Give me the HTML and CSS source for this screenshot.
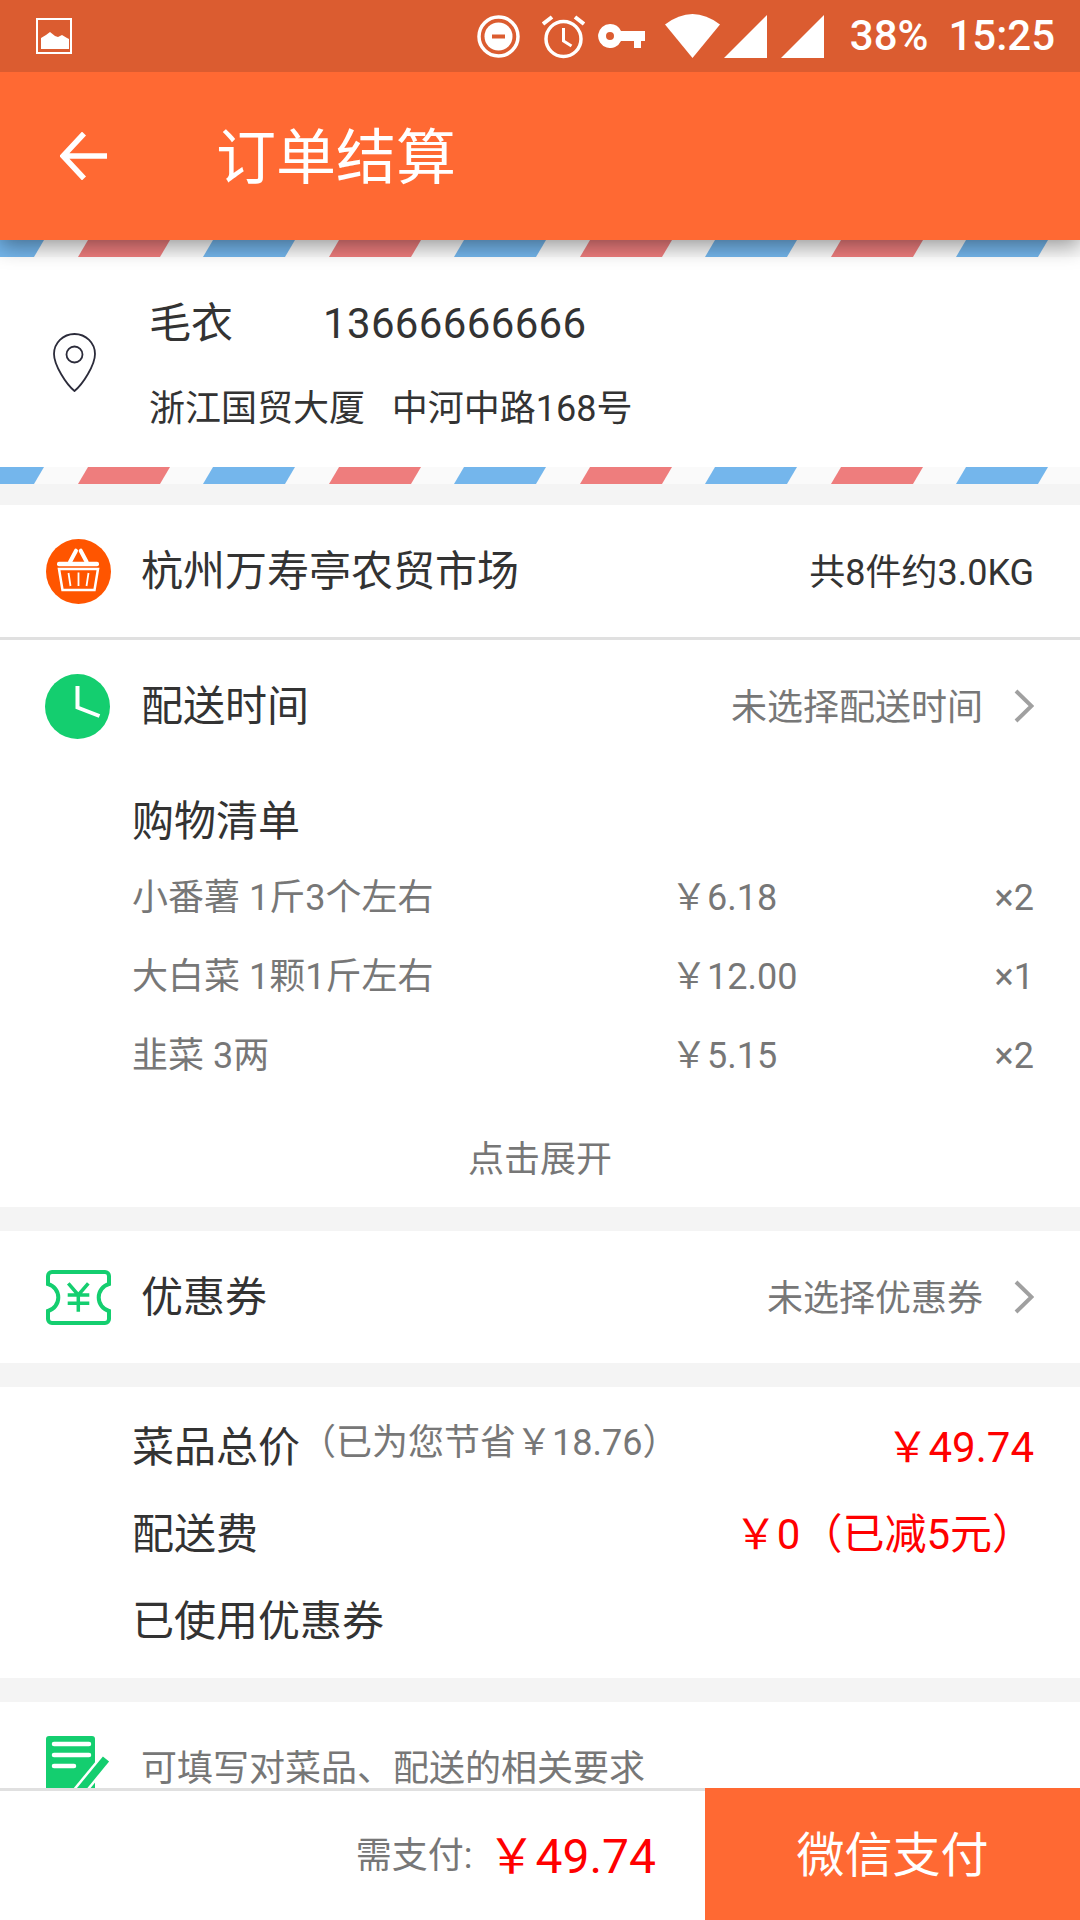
FILE: index.html
```html
<!DOCTYPE html>
<html lang="zh-CN">
<head>
  <meta charset="UTF-8">
  <title>订单结算</title>
  <meta name="viewport" content="width=device-width, initial-scale=1.0">
  <link rel="stylesheet" href="styles.css">
</head>
<body>

<div class="status-bar">
  <svg class="st-pic" width="36" height="36" viewBox="0 0 36 36">
    <rect x="1" y="1" width="34" height="34" fill="none" stroke="#fff" stroke-width="2"/>
    <path d="M5 31V20l5-3 4-3 5 4 3 1 4-2 5 3 2 1v10z" fill="#fff"/>
  </svg>
  <div class="status-right">
    <svg width="43" height="43" viewBox="0 0 43 43">
      <circle cx="21.5" cy="21.5" r="19.5" fill="none" stroke="#fff" stroke-width="3.5"/>
      <circle cx="21.5" cy="21.5" r="14" fill="#fff"/>
      <rect x="15" y="19.5" width="13" height="4" fill="#db5c30"/>
    </svg>
    <svg class="gap-22" width="43" height="46" viewBox="0 0 43 46">
      <circle cx="21.5" cy="26" r="17.5" fill="none" stroke="#fff" stroke-width="3.5"/>
      <path d="M21.5 15v13l8 5" fill="none" stroke="#fff" stroke-width="3"/>
      <path d="M1 11 10 4M42 11 33 4" fill="none" stroke="#fff" stroke-width="4"/>
    </svg>
    <svg class="gap-13" width="47" height="24" viewBox="0 0 47 24">
      <path fill-rule="evenodd" d="M12 0a12 12 0 0 1 11 7h24v10h-4v7H36v-7H23A12 12 0 1 1 12 0zm0 8a4 4 0 1 0 0 8 4 4 0 0 0 0-8z" fill="#fff"/>
    </svg>
    <svg class="gap-20" width="55" height="44" viewBox="0 0 55 44">
      <path d="M0 10.5Q27.500-10.500 55 10.500L27.500 44z" fill="#fff"/>
    </svg>
    <svg class="gap-4" width="43" height="43" viewBox="0 0 43 43"><path d="M43 0V43H0z" fill="#fff"/></svg>
    <svg class="gap-14" width="43" height="43" viewBox="0 0 43 43"><path d="M43 0V43H0z" fill="#fff"/></svg>
    <span class="st-text gap-26">38%</span>
    <span class="st-text gap-20">15:25</span>
  </div>
</div>

<header class="toolbar">
  <svg width="48" height="48" viewBox="0 0 48 48">
    <path d="M47 24H4M24 1.500 3 24l21 22.500" fill="none" stroke="#fff" stroke-width="5.500"/>
  </svg>
  <h1>订单结算</h1>
</header>

<main class="content">
  <section class="address">
    <svg class="airmail" width="1080" height="17">
      <defs>
        <pattern id="mail" width="251" height="17" patternUnits="userSpaceOnUse">
          <path d="M-38 0H44L34 17H-48z" fill="#74b6ec"/>
          <path d="M88 0H170L160 17H78z" fill="#ee7d7d"/>
          <path d="M213 0H295L285 17H203z" fill="#74b6ec"/>
        </pattern>
      </defs>
      <rect width="1080" height="17" fill="#fafafa"/>
      <rect width="1080" height="17" fill="url(#mail)"/>
    </svg>
    <div class="address-body">
      <svg class="pin" width="43" height="59" viewBox="0 0 43 59">
        <path d="M21.500 1C10 1 1 10 1 21c0 11 12 30 20.500 37C30 51 42 32 42 21 42 10 33 1 21.500 1z" fill="none" stroke="#2b2b3a" stroke-width="1.800"/>
        <circle cx="21.500" cy="21.500" r="8" fill="none" stroke="#2b2b3a" stroke-width="1.800"/>
      </svg>
      <div class="address-text">
        <div class="contact"><span class="contact-name">毛衣</span><span class="contact-phone">13666666666</span></div>
        <div class="street">浙江国贸大厦&nbsp;&nbsp;&nbsp;中河中路168号</div>
      </div>
    </div>
    <svg class="airmail" width="1080" height="17">
      <rect width="1080" height="17" fill="#fafafa"/>
      <rect width="1080" height="17" fill="url(#mail)"/>
    </svg>
  </section>

  <section class="card">
    <div class="row row-line">
      <svg class="row-icon" width="65" height="65" viewBox="0 0 65 65">
        <circle cx="32.500" cy="32.500" r="32.500" fill="#ff5500"/>
        <path d="M24 23 30 11.700M40.700 23 34.700 11.700" stroke="#fff" stroke-width="4" stroke-linecap="round"/>
        <rect x="11" y="22.700" width="42" height="4.500" rx="2" fill="#fff"/>
        <path d="M13 30H52L48.500 51H16.500z" fill="none" stroke="#fff" stroke-width="2.500"/>
        <path d="M32.500 33.500V47M22.500 34 24.500 47M42.500 34 40.500 47" stroke="#fff" stroke-width="1.800"/>
      </svg>
      <span class="row-title">杭州万寿亭农贸市场</span>
      <span class="row-note dark">共8件约3.0KG</span>
    </div>
    <div class="row">
      <svg class="row-icon clock" width="65" height="65" viewBox="0 0 65 65">
        <circle cx="32.500" cy="32.500" r="32.500" fill="#14ce6f"/>
        <path d="M32.500 12V33.500L54.500 42" fill="none" stroke="#fff" stroke-width="4"/>
      </svg>
      <span class="row-title">配送时间</span>
      <span class="row-note">未选择配送时间</span>
      <svg class="chevron" width="20" height="34" viewBox="0 0 20 34"><path d="M2 2 17.500 17 2 32" fill="none" stroke="#a0a0a0" stroke-width="4"/></svg>
    </div>
    <div class="list">
      <div class="list-title">购物清单</div>
      <div class="list-item"><span>小番薯 1斤3个左右</span><span>￥6.18</span><span>×2</span></div>
      <div class="list-item"><span>大白菜 1颗1斤左右</span><span>￥12.00</span><span>×1</span></div>
      <div class="list-item"><span>韭菜 3两</span><span>￥5.15</span><span>×2</span></div>
      <div class="list-more">点击展开</div>
    </div>
  </section>

  <section class="card">
    <div class="row">
      <svg class="row-icon" width="65" height="55" viewBox="0 0 65 55">
        <path d="M6 2H59A4 4 0 0 1 63 6V14A14 14 0 0 0 63 41V49A4 4 0 0 1 59 53H6A4 4 0 0 1 2 49V41A14 14 0 0 0 2 14V6A4 4 0 0 1 6 2z" fill="none" stroke="#14ce6f" stroke-width="4"/>
        <path d="M22.300 13.300 32.300 25 42.300 13.300M21.700 25H43.300M21.700 33.300H43.300M32.300 25V41.700" fill="none" stroke="#14ce6f" stroke-width="3.500"/>
      </svg>
      <span class="row-title">优惠券</span>
      <span class="row-note">未选择优惠券</span>
      <svg class="chevron" width="20" height="34" viewBox="0 0 20 34"><path d="M2 2 17.500 17 2 32" fill="none" stroke="#a0a0a0" stroke-width="4"/></svg>
    </div>
  </section>

  <section class="card totals">
    <div class="total-row">
      <span>菜品总价<small>（已为您节省￥18.76）</small></span>
      <span class="red">￥49.74</span>
    </div>
    <div class="total-row">
      <span>配送费</span>
      <span class="red">￥0（已减5元）</span>
    </div>
    <div class="total-row">
      <span>已使用优惠券</span>
    </div>
  </section>

  <section class="card remark">
    <svg width="65" height="70" viewBox="0 0 65 70">
      <rect width="49" height="70" rx="3" fill="#14ce6f"/>
      <path d="M8 8H43M8 19H43M8 30H28" stroke="#fff" stroke-width="4.500" stroke-linecap="round"/>
      <path d="M60 23 28 62" stroke="#fff" stroke-width="13"/>
      <path d="M60 23 28 62" stroke="#14ce6f" stroke-width="8"/>
    </svg>
    <span>可填写对菜品、配送的相关要求</span>
  </section>
</main>

<footer class="paybar">
  <div class="pay-sum">
    <span class="pay-label">需支付:</span>
    <span class="pay-price">￥49.74</span>
  </div>
  <div class="pay-button">微信支付</div>
</footer>

</body>
</html>
```

FILE: styles.css
```css
* {
  box-sizing: border-box;
}
body {
  margin: 0;
  width: 1080px;
  height: 1920px;
  overflow: hidden;
  display: flex;
  flex-direction: column;
  font-family: Roboto, 'Noto Sans CJK SC', sans-serif;
  color: #333;
  background: #f4f4f4;
}
svg {
  display: block;
  flex: none;
}

/* status bar */
.status-bar {
  height: 72px;
  flex: none;
  background: #db5c30;
  display: flex;
  align-items: center;
  padding: 0 25px 0 36px;
  color: white;
  position: relative;
  z-index: 3;
}
.status-right {
  margin-left: auto;
  display: flex;
  align-items: center;
}
.st-text {
  font-size: 42px;
  font-weight: 500;
  line-height: 72px;
}
.gap-4 { margin-left: 4px; }
.gap-13 { margin-left: 13px; }
.gap-14 { margin-left: 14px; }
.gap-20 { margin-left: 20px; }
.gap-22 { margin-left: 22px; }
.gap-26 { margin-left: 26px; }

/* toolbar */
.toolbar {
  height: 168px;
  flex: none;
  background: #ff6933;
  display: flex;
  align-items: center;
  padding-left: 60px;
  position: relative;
  z-index: 2;
  box-shadow: 0 6px 20px rgba(0,0,0,0.4);
}
.toolbar h1 {
  margin: 0 0 0 108px;
  padding-bottom: 7px;
  font-size: 60px;
  font-weight: 400;
  color: white;
}

.content {
  flex: 1;
  min-height: 0;
  overflow: hidden;
}

/* address block */
.address {
  background: white;
}
.address-body {
  height: 210px;
  display: flex;
  align-items: center;
  padding-left: 53px;
}
.pin {
  margin-right: 53px;
}
.address-text {
  display: flex;
  flex-direction: column;
}
.contact {
  font-size: 42px;
  line-height: 60px;
  margin-top: 3px;
}
.contact-name {
  display: inline-block;
  width: 174px;
}
.contact-phone {
  letter-spacing: 0.35px;
}
.street {
  font-size: 36px;
  line-height: 50px;
  margin-top: 30px;
}

/* cards */
.card {
  background: white;
  margin-top: 21px;
}
.card + .card {
  margin-top: 24px;
}
.row {
  height: 132px;
  display: flex;
  align-items: center;
  padding: 0 46px;
}
.row-line {
  height: 135px;
  border-bottom: 3px solid #e0e0e0;
}
.row-icon {
  margin-right: 30px;
}
.row-icon.clock {
  margin: 0 31px 0 -1px;
}
.row-title {
  font-size: 42px;
  padding-bottom: 7px;
}
.row-note {
  margin-left: auto;
  font-size: 36px;
  color: #777;
  padding-bottom: 4px;
}
.row-note.dark {
  color: #333;
}
.chevron {
  margin-left: 31px;
}

/* shopping list */
.list {
  padding: 0 46px 0 132px;
  height: 435px;
}
.list-title {
  font-size: 42px;
  height: 87px;
  line-height: 100px;
}
.list-item {
  display: grid;
  grid-template-columns: 539px 1fr auto;
  height: 79px;
  line-height: 79px;
  align-items: baseline;
  font-size: 36px;
  color: #777;
}
.list-more {
  margin: 34px 0 0 -86px;
  text-align: center;
  font-size: 36px;
  color: #777;
}

/* totals */
.totals {
  height: 291px;
  padding: 13px 46px 0 132px;
}
.total-row {
  height: 87px;
  display: flex;
  justify-content: space-between;
  align-items: center;
  font-size: 42px;
}
.total-row small {
  font-size: 36px;
  color: #777;
  vertical-align: 7px;
}
.red {
  color: #f00;
}

/* remark, runs under the pay bar */
.remark {
  height: 132px;
  display: flex;
  align-items: flex-start;
  padding: 34px 0 0 46px;
  font-size: 36px;
  color: #777;
}
.remark span {
  margin: 17px 0 0 30px;
  line-height: 32px;
}

/* pay bar */
.paybar {
  height: 132px;
  flex: none;
  background: white;
  display: flex;
  border-top: 3px solid #e0e0e0;
}
.pay-sum {
  flex: 1;
  display: flex;
  align-items: center;
  justify-content: flex-end;
  padding: 0 49px 8px 0;
}
.pay-label {
  font-size: 36px;
  color: #777;
}
.pay-price {
  font-size: 48px;
  color: #f00;
  margin-left: 15px;
}
.pay-button {
  width: 375px;
  margin-top: -3px;
  padding-bottom: 7px;
  background: #ff6933;
  color: white;
  font-size: 48px;
  display: flex;
  align-items: center;
  justify-content: center;
}
```
